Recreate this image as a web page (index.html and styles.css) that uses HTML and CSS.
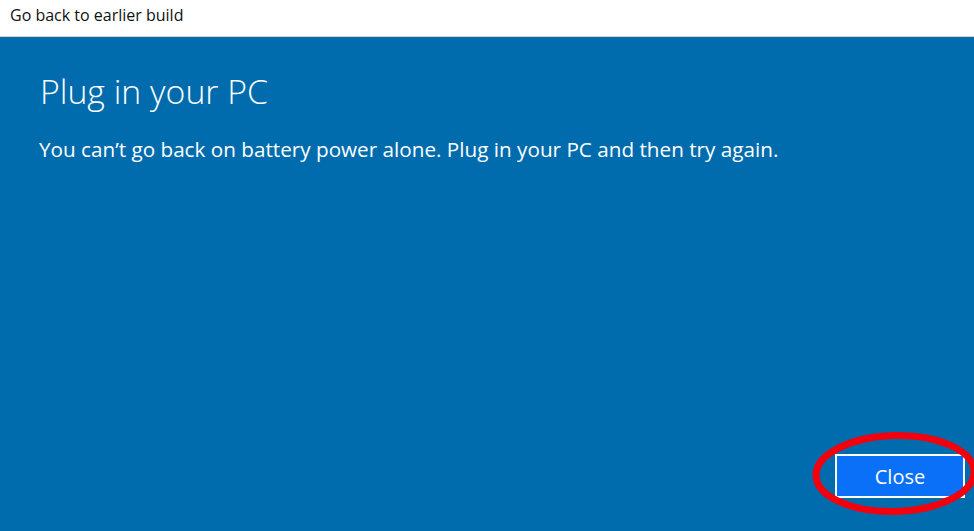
FILE: index.html
```html
<!DOCTYPE html>
<html>
<head>
<meta charset="utf-8">
<link rel="stylesheet" href="styles.css">
</head>
<body>
<div class="window">
  <div class="titlebar">Go back to earlier build</div>
  <div class="content">
    <h1 class="title">Plug in your PC</h1>
    <p class="message">You can’t go back on battery power alone. Plug in your PC and then try again.</p>
    <div class="spacer"></div>
    <div class="actions">
      <button class="btn">Close</button>
    </div>
  </div>
  <svg class="highlight" width="180" height="100" viewBox="0 0 180 100">
    <ellipse cx="90" cy="48.5" rx="79" ry="38" fill="none" stroke="#f2000e" stroke-width="7" transform="rotate(-1.5 90 48.5)"/>
  </svg>
</div>
</body>
</html>
```
FILE: styles.css
```css
html, body {
  margin: 0;
  padding: 0;
  width: 974px;
  height: 531px;
  overflow: hidden;
}
body {
  font-family: "Open Sans", "Noto Sans", sans-serif;
}
.window {
  position: relative;
  width: 974px;
  height: 531px;
  display: flex;
  flex-direction: column;
}
.titlebar {
  height: 36px;
  background: #ffffff;
  border-bottom: 1px solid #d4d4d4;
  color: #111;
  font-size: 16px;
  padding-left: 10px;
  line-height: 31px;
  box-sizing: content-box;
}
.content {
  flex: 1;
  background: #006cae;
  display: flex;
  flex-direction: column;
  padding: 0 9px 33px 40px;
}
.title {
  margin: 32px 0 0 0;
  font-weight: 300;
  font-size: 33.8px;
  line-height: 44px;
  color: #fff;
}
.message {
  margin: 22px 0 0 -1px;
  font-size: 20.7px;
  line-height: 28px;
  color: #fff;
}
.spacer { flex: 1; }
.actions {
  display: flex;
  justify-content: flex-end;
}
.btn {
  width: 130px;
  height: 44px;
  background: #0a70f8;
  border: 2px solid #ffffff;
  color: #fff;
  font-family: inherit;
  font-size: 20px;
  padding: 0;
}
.highlight {
  position: absolute;
  left: 805px;
  top: 425px;
}
```
